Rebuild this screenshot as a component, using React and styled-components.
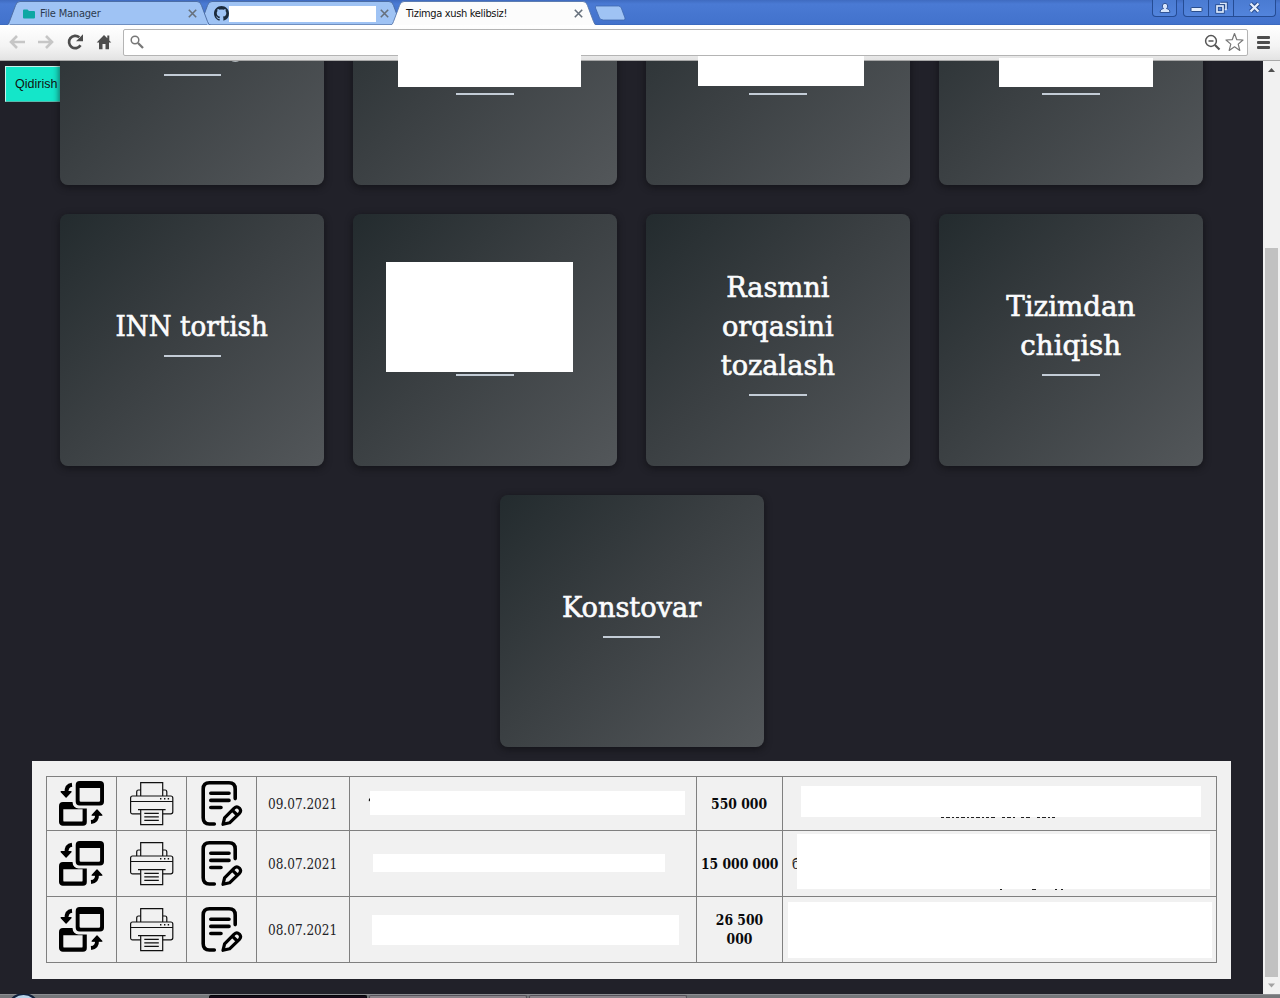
import React from "react";
import styled, { createGlobalStyle } from "styled-components";

const Global = createGlobalStyle`
  * { box-sizing: border-box; }
  html, body { margin: 0; padding: 0; }
  body { width: 1280px; height: 998px; overflow: hidden; background: #212129; }
`;

const slab = `"Roboto Slab", "DejaVu Serif Condensed", "DejaVu Serif", serif`;

const Screen = styled.div`
  display: flex;
  flex-direction: column;
  width: 1280px;
  height: 998px;
  overflow: hidden;
`;

/* ---------- browser frame ---------- */

const TabStrip = styled.header`
  position: relative;
  display: flex;
  flex: none;
  height: 25px;
  padding-left: 6px;
  background: linear-gradient(#3f6bc0 0, #4a7ad4 4px, #4272cc 24px, #3563b4 25px);
`;

const TabBox = styled.div`
  position: relative;
  display: flex;
  align-items: center;
  flex: none;
  width: ${(p) => p.$width}px;
  height: 25px;
  margin-right: -13px;
  padding: 2px 14px 0 ${(p) => p.$left}px;
  z-index: ${(p) => p.$layer};
`;

const TabShape = styled.svg`
  position: absolute;
  inset: 0;
  z-index: -1;
`;

const TabTitle = styled.span`
  flex: 1;
  padding-left: ${(p) => p.$indent || 0}px;
  color: ${(p) => (p.$active ? "#111" : "#2c3b50")};
  font: 11px/14px "DejaVu Sans Condensed", "DejaVu Sans", sans-serif;
  letter-spacing: ${(p) => p.$spacing}px;
  white-space: nowrap;
`;

const TabMask = styled.span`
  flex: none;
  width: 147px;
  height: 16px;
  margin-right: auto;
  background: #fff;
`;

const WindowButtons = styled.div`
  display: flex;
  margin-left: auto;
  margin-right: 4px;
  height: 17px;
`;

const WindowButton = styled.span`
  display: flex;
  align-items: center;
  justify-content: center;
  width: ${(p) => p.$width}px;
  height: 17px;
  padding-bottom: 1px;
  margin-left: ${(p) => p.$gap || 0}px;
  border: 1px solid #254c94;
  border-top: 0;
  border-left-width: ${(p) => (p.$joined ? 0 : 1)}px;
  border-radius: 0 0 ${(p) => (p.$right ? 4 : 0)}px ${(p) => (p.$joined ? 0 : 4)}px;
  background: linear-gradient(#4a7bd2, #5284dc);
`;

const Toolbar = styled.nav`
  display: flex;
  align-items: center;
  flex: none;
  height: 36px;
  padding: 0 8px;
  background: linear-gradient(#fff, #f4f4f4 60%, #e3e3e3);
  border-bottom: 1px solid #a8a8a8;
`;

const NavIcon = styled.svg`
  flex: none;
  width: 18px;
  height: 18px;
  margin: 0 11px 1px 0;
`;

const AddressBar = styled.div`
  display: flex;
  align-items: center;
  flex: none;
  width: 1125px;
  height: 27px;
  margin-left: -1px;
  padding: 0 3px 1px 6px;
  border: 1px solid #b4b4b4;
  border-radius: 2px;
  background: #fff;
`;

const Spacer = styled.span`
  flex: 1;
`;

const MenuBars = styled.span`
  display: flex;
  flex-direction: column;
  gap: 2px;
  margin: 0 0 1px 9px;
  width: 13px;

  i {
    height: 3px;
    border-radius: 1px;
    background: #4d4d4d;
  }
`;

const Body = styled.div`
  display: flex;
  flex: none;
  height: 933px;
`;

const Page = styled.main`
  position: relative;
  width: 1263px;
  height: 933px;
  overflow: hidden;
  background: #212129;
`;

const ScrollTrack = styled.aside`
  display: flex;
  flex-direction: column;
  align-items: center;
  justify-content: space-between;
  width: 17px;
  background: #f1f1f1;
`;

const ScrollArrow = styled.svg`
  flex: none;
  width: 17px;
  height: 17px;
`;

const ScrollThumb = styled.div`
  width: 13px;
  height: 729px;
  margin-top: auto;
  background: #c1c1c1;
`;

const Taskbar = styled.footer`
  display: flex;
  align-items: flex-end;
  flex: none;
  height: 4px;
  background: #75777a;
  border-top: 1px solid #8d8e92;
`;

const Orb = styled.svg`
  flex: none;
  width: 209px;
  height: 4px;
`;

const TaskItem = styled.span`
  width: ${(p) => p.$width}px;
  height: 3px;
  margin-right: 2px;
  border: 1px solid ${(p) => (p.$dark ? "#050508" : "#56525a")};
  border-bottom: 0;
  border-radius: 2px 2px 0 0;
  background: ${(p) => (p.$dark ? "#150b18" : "#8b858b")};
`;

/* ---------- page ---------- */

const SearchButton = styled.button`
  position: absolute;
  left: 5px;
  top: 5px;
  width: 72px;
  height: 36px;
  padding: 0 0 1px 9px;
  border: 1px solid #c9f2ec;
  border-bottom-color: #59b9ad;
  background: #14e6c9;
  color: #111;
  font: 12.5px "Liberation Sans", Arial, sans-serif;
  text-align: left;
`;

const Cards = styled.section`
  display: flex;
  flex-wrap: wrap;
  justify-content: center;
  gap: 29px;
  margin-top: -128px;
  padding: 0 60px;
`;

const Card = styled.article`
  position: relative;
  display: flex;
  flex-direction: column;
  align-items: center;
  justify-content: center;
  width: 264px;
  height: 252px;
  border-radius: 8px;
  background: linear-gradient(135deg, #232b2e 0%, #3a3f42 45%, #53575a 100%);
  box-shadow: 0 2px 6px 1px rgba(15, 15, 18, 0.6);
`;

const CardTitle = styled.h2`
  min-height: ${(p) => p.$lines * 39}px;
  margin: 0;
  color: #fbfcfd;
  font: 400 28.5px/39px ${slab};
  text-align: center;
  white-space: pre;
  transform: scaleX(${(p) => p.$stretch || 1});
  -webkit-text-stroke: 0.6px #fbfcfd;
`;

const Rule = styled.span`
  width: ${(p) => (p.$wide ? 58 : 57)}px;
  height: 2px;
  margin: 9px ${(p) => (p.$wide ? 1 : 0)}px 17px 0;
  background: #c3ccd6;
`;

const CardMask = styled.span`
  position: absolute;
  left: ${(p) => p.$x}px;
  top: ${(p) => p.$y}px;
  width: ${(p) => p.$w}px;
  height: ${(p) => p.$h}px;
  background: #fff;
`;

const ToolbarMask = styled.span`
  position: absolute;
  left: ${(p) => p.$x}px;
  top: ${(p) => p.$y}px;
  width: ${(p) => p.$w}px;
  height: ${(p) => 61 - p.$y}px;
  background: #fff;
`;

const Panel = styled.section`
  width: 1199px;
  height: 218px;
  margin: 14px 0 0 32px;
  padding: 15px 14px;
  background: #f1f1f1;
`;

const Table = styled.div`
  width: 1171px;
  border-left: 1px solid #808080;
  border-top: 1px solid #808080;
`;

const Row = styled.div`
  display: grid;
  grid-template-columns: 70px 70px 70px 93px 347px 86px 434px;
  height: ${(p) => p.$height}px;
`;

const Cell = styled.div`
  position: relative;
  display: flex;
  align-items: ${(p) => (p.$start ? "flex-start" : "center")};
  justify-content: ${(p) => (p.$start ? "flex-start" : "center")};
  border-right: 1px solid #808080;
  border-bottom: 1px solid #808080;
  overflow: hidden;
`;

const DateText = styled.span`
  color: #222226;
  font: 14.6px/19px ${slab};
  white-space: nowrap;
  transform: scaleX(0.92);
`;

const Amount = styled.b`
  padding-bottom: 1px;
  color: #0a0a0c;
  font: 700 14.8px/19px ${slab};
  text-align: center;
  white-space: pre;
  transform: scaleX(0.93);
`;

const CellMask = styled.span`
  flex: none;
  width: ${(p) => p.$w}px;
  height: ${(p) => p.$h}px;
  margin: ${(p) => p.$y}px 0 0 ${(p) => p.$x}px;
  background: #fff;
  z-index: 1;
`;

const Peek = styled.span`
  position: absolute;
  left: ${(p) => p.$x}px;
  top: ${(p) => p.$y}px;
  color: #222;
  font: 14.6px/19px ${slab};
`;

const Marks = styled.svg`
  position: absolute;
  left: ${(p) => p.$x}px;
  top: ${(p) => p.$y}px;
`;

/* ---------- icons ---------- */

function ExchangeIcon() {
  return (
    <svg width="45" height="45" viewBox="0 0 45 45">
      <path fillRule="evenodd" d="M4 21H24a3.8 3.8 0 0 1 3.8 3.8V41a3.8 3.8 0 0 1-3.8 3.8H4A3.8 3.8 0 0 1 0 41V25a4 4 0 0 1 4-4ZM4.3 28.3V39.4q0 1.2 1.2 1.2H22.4q1.2 0 1.2-1.2V28.3Z" />
      <rect x="13.6" y="-3" width="34" height="30.6" rx="6" fill="#f1f1f1" />
      <path fillRule="evenodd" d="M20.7 0H41a4 4 0 0 1 4 4V20.6a4 4 0 0 1-4 4H20.7a4 4 0 0 1-4-4V4a4 4 0 0 1 4-4ZM20.6 7V19.4q0 1.3 1.3 1.3H39.8q1.3 0 1.3-1.3V7Z" />
      <path d="M2.2 10.7H12L7.1 16Z" stroke="#000" strokeWidth="1.3" strokeLinejoin="round" />
      <path d="M7.5 12Q7 4.4 13 3.7" fill="none" stroke="#000" strokeWidth="3.9" />
      <path d="M33.2 34.2H42.8L38 29Z" stroke="#000" strokeWidth="1.3" strokeLinejoin="round" />
      <path d="M38 33Q38.5 40.4 32 41" fill="none" stroke="#000" strokeWidth="3.9" />
    </svg>
  );
}

function PrinterIcon() {
  return (
    <svg width="45" height="45" viewBox="0 0 45 45" fill="none" stroke="#111" strokeWidth="1.2">
      <path d="M11.7 15V1.7H33.7V15M11.7 9H9.5Q7.7 9 7.7 11V15M33.7 9H36Q37.8 9 37.8 11V15" />
      <path d="M11.7 32.8H3.6Q1.6 32.8 1.6 30.8V17Q1.6 15 3.6 15H41.8Q43.8 15 43.8 17V30.8Q43.8 32.8 41.8 32.8H33.7M1.6 20.5H43.8M9 28.6H36.6" />
      <path d="M11.7 28.6V43.7H33.7V28.6M15.3 32.3H29.8M15.3 35.8H29.8M15.3 39.4H29.8" />
      <path d="M31 17.8h1.4M35 17.8h1.4M38.7 17.8h1.4" strokeWidth="1.4" />
    </svg>
  );
}

function NoteIcon() {
  return (
    <svg width="45" height="45" viewBox="0 0 45 45" fill="none" stroke="#000" strokeWidth="3.6" strokeLinecap="round" strokeLinejoin="round">
      <path d="M15.3 43H10.4Q4.2 43 4.2 36.8V8Q4.2 1.8 10.4 1.8H30Q36.2 1.8 36.2 8V17.6" />
      <path d="M11.8 12.2H30M11.8 19.4H30M11.8 26.5H22" />
      <path d="M24 43.3L25.6 36.8L35.2 27.1Q37.8 24.8 40.4 27.1Q42.8 29.8 40.4 32.3L30.6 41.8ZM33.3 29.2L38.2 34" strokeWidth="3.2" />
    </svg>
  );
}

function CloseMark() {
  return (
    <svg width="9" height="9" viewBox="0 0 9 9" stroke="#66707c" strokeWidth="1.6">
      <path d="M.8.8L8.2 8.2M8.2.8L.8 8.2" />
    </svg>
  );
}

function Tab({ width, left, layer, active, children }) {
  const w = width;
  return (
    <TabBox $width={w} $left={left} $layer={layer}>
      <TabShape width={w} height="25" viewBox={`0 0 ${w} 25`}>
        <path
          d={`M0 25.5C2 25 2.5 24 3.5 21.5L9.5 5.5Q10.7 1.5 14 1.5H${w - 14}Q${w - 10.7} 1.5 ${w - 9.5} 5.5L${w - 3.5} 21.5Q${w - 2.5} 25 ${w} 25.5Z`}
          fill={active ? "#fcfcfc" : "#9fc3f4"}
          stroke={active ? "#5676ac" : "#48699f"}
          strokeWidth="0.9"
        />
        {!active && <path d={`M4 24.5H${w - 4}`} stroke="#6f8fc0" />}
      </TabShape>
      {children}
      <CloseMark />
    </TabBox>
  );
}

/* ---------- data ---------- */

const cards = [
  { lines: 1 },
  { lines: 2, wide: true },
  { lines: 2, wide: true },
  { lines: 2, wide: true },
  { title: "INN tortish", lines: 1, stretch: 1.02 },
  { lines: 2, wide: true, mask: [33, 48, 187, 110] },
  { title: "Rasmni\norqasini\ntozalash", lines: 3, stretch: 1.06, wide: true },
  { title: "Tizimdan\nchiqish", lines: 2, stretch: 1.08, wide: true },
  { title: "Konstovar", lines: 1, stretch: 1.06 },
];

const topMasks = [
  { x: 398, y: 50, w: 183, h: 26 },
  { x: 698, y: 56, w: 166, h: 25 },
  { x: 999, y: 58, w: 154, h: 26 },
];

const rows = [
  { date: "09.07.2021", amount: "550 000", height: 54, name: [20, 14, 315, 24], note: [18, 9, 400, 31] },
  { date: "08.07.2021", amount: "15 000 000", height: 66, name: [23, 23, 292, 18], note: [14, 3, 413, 55] },
  { date: "08.07.2021", amount: "26 500\n000", height: 66, name: [22, 18, 307, 30], note: [5, 5, 424, 56] },
];

export default function App() {
  return (
    <Screen>
      <Global />
      <TabStrip>
        <Tab width={205} left={17} layer={2}>
          <svg width="12" height="10" viewBox="0 0 12 10">
            <path d="M0 1.5Q0 .5 1 .5H4.5L6 2H11Q12 2 12 3V8.5Q12 9.5 11 9.5H1Q0 9.5 0 8.5Z" fill="#0ca7a3" />
          </svg>
          <TabTitle $indent={5} $spacing={-0.2}>File Manager</TabTitle>
        </Tab>
        <Tab width={205} left={16} layer={1}>
          <svg width="15" height="15" viewBox="0 0 16 16" fill="#1c2b3c">
            <path d="M8 0C3.58 0 0 3.58 0 8c0 3.54 2.29 6.53 5.47 7.59.4.07.55-.17.55-.38 0-.19-.01-.82-.01-1.49-2.01.37-2.53-.49-2.69-.94-.09-.23-.48-.94-.82-1.13-.28-.15-.68-.52-.01-.53.63-.01 1.08.58 1.23.82.72 1.21 1.87.87 2.33.66.07-.52.28-.87.51-1.07-1.78-.2-3.64-.89-3.64-3.95 0-.87.31-1.59.82-2.15-.08-.2-.36-1.02.08-2.12 0 0 .67-.21 2.2.82.64-.18 1.32-.27 2-.27s1.36.09 2 .27c1.53-1.04 2.2-.82 2.2-.82.44 1.1.16 1.92.08 2.12.51.56.82 1.27.82 2.15 0 3.07-1.87 3.75-3.65 3.95.29.25.54.73.54 1.48 0 1.07-.01 1.93-.01 2.2 0 .21.15.46.55.38A8.01 8.01 0 0 0 16 8c0-4.42-3.58-8-8-8Z" />
          </svg>
          <TabMask />
        </Tab>
        <Tab width={207} left={16} layer={3} active>
          <TabTitle $active $spacing={-0.34}>Tizimga xush kelibsiz!</TabTitle>
        </Tab>
        <svg width="44" height="25" viewBox="0 0 44 25">
          <path d="M12.5 6H34.5Q36.5 6 37.3 8L41 18Q41.5 20 39.5 20H19.5Q16.5 20 15.5 18L11.5 8Q11 6 12.5 6Z" fill="#9fc3f4" stroke="#3f67ad" strokeWidth=".8" />
        </svg>
        <WindowButtons>
          <WindowButton $width={25} $right>
            <svg width="12" height="12" viewBox="0 0 12 12" fill="#d6e5fb" stroke="#264a8c" strokeWidth=".9">
              <path d="M1.2 10.5Q.8 7.2 4.5 6.6Q3.3 5.5 3.3 4Q3.5 1.300 6 1.300T8.700 4Q8.700 5.500 7.500 6.600Q11.200 7.200 10.800 10.500Z" />
            </svg>
          </WindowButton>
          <WindowButton $width={26} $gap={6}>
            <svg width="13" height="11" viewBox="0 0 13 11">
              <rect x="1" y="5.500" width="11" height="4" rx=".5" fill="#e4eefc" stroke="#294d8d" />
            </svg>
          </WindowButton>
          <WindowButton $width={25} $joined>
            <svg width="13" height="13" viewBox="0 0 13 13" fill="none">
              <path d="M5.5 2.5H11V8" stroke="#264a8c" strokeWidth="3.6" />
              <path d="M5 2.5H11V8.5H8" stroke="#dce9fc" strokeWidth="1.6" />
              <rect x="2" y="5" width="6" height="6" stroke="#264a8c" strokeWidth="3.4" />
              <rect x="2" y="5" width="6" height="6" stroke="#dce9fc" strokeWidth="1.7" />
            </svg>
          </WindowButton>
          <WindowButton $width={42} $joined $right>
            <svg width="13" height="11" viewBox="0 0 13 11">
              <path d="M2.5 1.5L10.5 9.5M10.5 1.5L2.5 9.5" stroke="#264a8c" strokeWidth="4.2" />
              <path d="M2.5 1.5L10.5 9.5M10.5 1.5L2.5 9.5" stroke="#e4eefc" strokeWidth="2.3" />
            </svg>
          </WindowButton>
        </WindowButtons>
      </TabStrip>

      <Toolbar>
        <NavIcon viewBox="0 0 18 18" fill="none" stroke="#c6c6c6" strokeWidth="2.6">
          <path d="M17 9H4M9 3L3 9L9 15" />
        </NavIcon>
        <NavIcon viewBox="0 0 18 18" fill="none" stroke="#c6c6c6" strokeWidth="2.6">
          <path d="M1 9H14M9 3L15 9L9 15" />
        </NavIcon>
        <NavIcon viewBox="0 0 18 18">
          <path d="M14.5 12.3A6.2 6.2 0 1 1 13.3 4.3" fill="none" stroke="#4d4d4d" strokeWidth="2.7" />
          <path d="M17 1.2V8.2H10Z" fill="#4d4d4d" />
        </NavIcon>
        <NavIcon viewBox="0 0 18 18" fill="#4d4d4d">
          <path d="M9 2L1.700 9.500H4V16.300H7.500V11H10.500V16.300H14V9.500H16.300L14.300 7.400V2.500H12.300V5.300Z" />
        </NavIcon>
        <AddressBar>
          <svg width="14" height="14" viewBox="0 0 14 14" fill="none" stroke="#777">
            <circle cx="5" cy="5" r="3.8" strokeWidth="1.5" />
            <path d="M8 8L13 13" strokeWidth="2.3" />
          </svg>
          <Spacer />
          <svg width="17" height="17" viewBox="0 0 17 17" fill="none" stroke="#555">
            <circle cx="7" cy="7" r="5.4" strokeWidth="1.5" />
            <path d="M4.5 7H9.5" strokeWidth="1.5" />
            <path d="M11 11L15.5 15.5" strokeWidth="2.2" />
          </svg>
          <svg width="23" height="20" viewBox="-3 0 23 20">
            <path d="M10.500 1.500L12.800 7.700L19 8L14.200 12.100L15.800 18.400L10.500 14.800L5.200 18.400L6.800 12.100L2 8L8.200 7.700Z" fill="#fff" stroke="#777" strokeWidth="1.200" strokeLinejoin="round" />
          </svg>
        </AddressBar>
        <MenuBars><i /><i /><i /></MenuBars>
      </Toolbar>

      <Body>
        <Page>
          <SearchButton>Qidirish</SearchButton>
          <Cards>
            {cards.map((c, i) => (
              <Card key={i}>
                <CardTitle $lines={c.lines} $stretch={c.stretch}>{c.title}</CardTitle>
                <Rule $wide={c.wide} />
                {c.mask && <CardMask $x={c.mask[0]} $y={c.mask[1]} $w={c.mask[2]} $h={c.mask[3]} />}
                {i === 0 && (
                  <Marks $x={171} $y={127} width="9" height="3">
                    <path d="M1 .8Q4.5 2 7.5 .8" fill="none" stroke="#aeb5b9" strokeWidth="1.1" />
                  </Marks>
                )}
              </Card>
            ))}
          </Cards>
          {topMasks.map((m) => (
            <CardMask key={m.x} $x={m.x} $y={0} $w={m.w} $h={m.h} />
          ))}
          <Panel>
            <Table>
              {rows.map((r, i) => (
                <Row key={i} $height={r.height}>
                  <Cell><ExchangeIcon /></Cell>
                  <Cell><PrinterIcon /></Cell>
                  <Cell><NoteIcon /></Cell>
                  <Cell><DateText>{r.date}</DateText></Cell>
                  <Cell $start>
                    {i === 0 && (
                      <Marks $x={18} $y={20} width="3" height="5">
                        <path d="M1 4.5Q0 1.5 3 .5V3Z" fill="#111" />
                      </Marks>
                    )}
                    <CellMask $x={r.name[0]} $y={r.name[1]} $w={r.name[2]} $h={r.name[3]} />
                  </Cell>
                  <Cell><Amount>{r.amount}</Amount></Cell>
                  <Cell $start>
                    {i === 0 && (
                      <Marks $x={158} $y={40} width="116" height="2">
                        <path d="M0 .5H54M61 .5H75M80 .5H90M96 .5H115" stroke="#222" strokeWidth="1" strokeDasharray="3 2 4 2 2 2" />
                      </Marks>
                    )}
                    {i === 1 && <Peek $x={9} $y={23}>б</Peek>}
                    {i === 1 && (
                      <Marks $x={216} $y={58} width="76" height="2">
                        <path d="M1 .5H3M33 .5H37M56 .5H58M62 .5H64" stroke="#222" strokeWidth="1.2" />
                      </Marks>
                    )}
                    <CellMask $x={r.note[0]} $y={r.note[1]} $w={r.note[2]} $h={r.note[3]} />
                  </Cell>
                </Row>
              ))}
            </Table>
          </Panel>
        </Page>
        <ScrollTrack>
          <ScrollArrow viewBox="0 0 17 17"><path d="M5 11L8.500 7L12 11Z" fill="#505050" /></ScrollArrow>
          <ScrollThumb />
          <ScrollArrow viewBox="0 0 17 17"><path d="M5 6.500L8.500 10.500L12 6.500Z" fill="#a3a3a3" /></ScrollArrow>
        </ScrollTrack>
      </Body>

      <Taskbar>
        <Orb viewBox="0 0 209 4">
          <circle cx="23.5" cy="16" r="17" fill="#10203a" />
          <circle cx="23.5" cy="15.5" r="14.5" fill="#b9d3e8" />
        </Orb>
        <TaskItem $width={158} $dark />
        <TaskItem $width={158} />
        <TaskItem $width={158} />
      </Taskbar>
      {topMasks.map((m) => (
        <ToolbarMask key={m.x} $x={m.x} $y={m.y} $w={m.w} />
      ))}
    </Screen>
  );
}
